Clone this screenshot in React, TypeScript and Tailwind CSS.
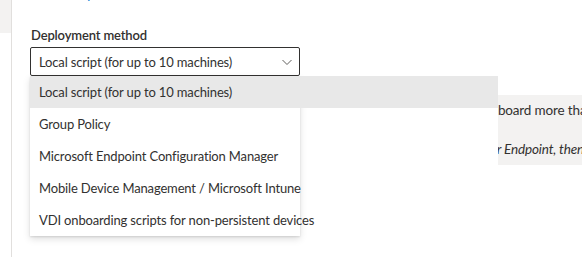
const font = { fontFamily: "Lato, 'Liberation Sans', sans-serif" };

const options = [
  "Local script (for up to 10 machines)",
  "Group Policy",
  "Microsoft Endpoint Configuration Manager",
  "Mobile Device Management / Microsoft Intune",
  "VDI onboarding scripts for non-persistent devices",
];

function Chevron() {
  return (
    <svg width="12" height="12" viewBox="0 0 12 12" fill="none">
      <path d="M1.5 4 L6 8.5 L10.5 4" stroke="#605e5c" strokeWidth="1" />
    </svg>
  );
}

export default function App() {
  return (
    <div
      className="relative h-[257px] w-[582px] overflow-hidden bg-white text-[13px] tracking-[-0.15px] text-[#323130]"
      style={font}
    >
      <div className="flex h-full">
        <div className="w-[11px] shrink-0">
          <div className="h-[33px] bg-[#f3f2f1]" />
        </div>
        <div className="w-px shrink-0 bg-[#e1dfdd]" />
        <div className="flex-1 pl-[18px]">
          <div className="h-[3px] overflow-hidden">
            <div className="-mt-[16px] pl-[32px] leading-5 text-[#0078d4]">Setup</div>
          </div>
          <div className="pt-[22px] pb-[2px] pl-px text-[13px] font-semibold leading-5">Deployment method</div>
          <div className="flex h-[29px] w-[270px] items-center justify-between rounded-[2px] border border-[#323130] pl-[8px] pr-[6px]">
            <span className="leading-5">{options[0]}</span>
            <Chevron />
          </div>
          <div className="mt-[19px] h-[70px] bg-[#f3f2f1] pt-[5px] text-[13.5px] leading-5 whitespace-nowrap">
            <p className="pl-[453px]">onboard more than 10 machines, use another method.</p>
            <p className="mt-[19px] pl-[456px] italic">for Endpoint, then run the script.</p>
          </div>
        </div>
      </div>

      <div className="absolute left-[30px] top-[76px] w-[468px]">
        <div className="absolute inset-x-0 top-0 h-[89px] bg-white" />
        <div className="relative w-[270px] bg-white shadow-[0_3.2px_7.2px_rgba(0,0,0,0.13),0_0.6px_1.8px_rgba(0,0,0,0.11)]">
          {options.map((o, i) => (
            <div key={o} className="relative flex h-[32px] items-center whitespace-nowrap pl-[9px]">
              {i === 0 && <div className="absolute inset-y-0 left-0 w-[468px] bg-[#e8e8e8]" />}
              <span className="relative leading-5">{o}</span>
            </div>
          ))}
        </div>
      </div>
    </div>
  );
}
